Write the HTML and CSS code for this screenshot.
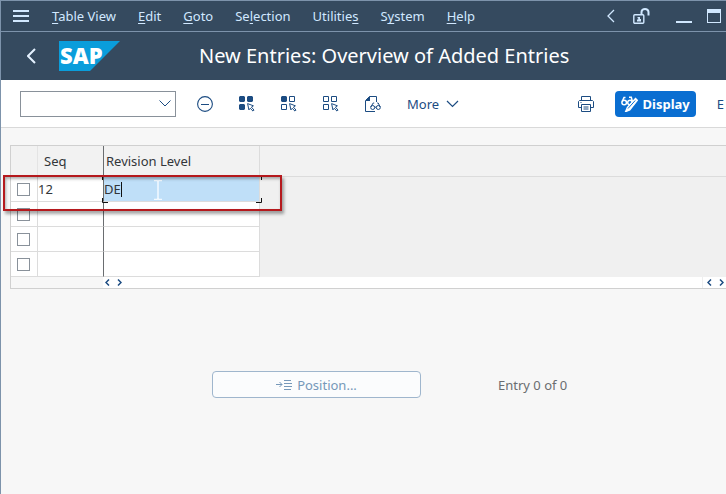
FILE: index.html
```html
<!DOCTYPE html>
<html lang="en">
<head>
  <meta charset="UTF-8">
  <meta name="viewport" content="width=device-width, initial-scale=1.0">
  <title>New Entries: Overview of Added Entries</title>
  <link rel="stylesheet" href="styles.css">
</head>
<body>
  <div class="window">
    <!-- Menu bar -->
    <nav class="menu-bar">
      <button class="hamburger" aria-label="Menu">
        <svg width="16" height="12" viewBox="0 0 16 12"><path d="M0 1h16M0 6h16M0 11h16" stroke="currentColor" stroke-width="2"/></svg>
      </button>
      <div class="menu-items">
        <button><u>T</u>able View</button>
        <button><u>E</u>dit</button>
        <button><u>G</u>oto</button>
        <button>Se<u>l</u>ection</button>
        <button>Utilitie<u>s</u></button>
        <button>S<u>y</u>stem</button>
        <button><u>H</u>elp</button>
      </div>
      <div class="window-controls">
        <button aria-label="Collapse">
          <svg width="8" height="14" viewBox="0 0 8 14"><path d="M7 1L1 7l6 6" fill="none" stroke="currentColor" stroke-width="1.3"/></svg>
        </button>
        <button aria-label="Unlock">
          <svg width="17" height="16" viewBox="0 0 17 16" fill="none" stroke="currentColor">
            <rect x=".8" y="6.8" width="10" height="8.5" rx="1" stroke-width="1.4"/>
            <path d="M8.5 6.5V4a3.5 3 0 0 1 7 0v3.5" stroke-width="2"/>
            <path d="M4.5 9H7v2h1v2.5H4v-2h1.200v-1.200h-.7z" fill="currentColor" stroke="none"/>
          </svg>
        </button>
        <button class="minimize" aria-label="Minimize">
          <svg width="16" height="14" viewBox="0 0 16 14"><path d="M0 13h16" stroke="currentColor" stroke-width="2"/></svg>
        </button>
        <button aria-label="Maximize">
          <svg width="14" height="14" viewBox="0 0 14 14"><rect x=".5" y=".5" width="13" height="13" fill="none" stroke="currentColor"/><path d="M0 0h14v4H0z" fill="currentColor"/></svg>
        </button>
      </div>
    </nav>

    <!-- Title bar -->
    <header class="title-bar">
      <button class="back" aria-label="Back">
        <svg width="9" height="16" viewBox="0 0 9 16"><path d="M8 1L1 8l7 7" fill="none" stroke="currentColor" stroke-width="2"/></svg>
      </button>
      <svg class="logo" width="62" height="30" viewBox="0 0 62 30" role="img" aria-label="SAP">
        <path d="M0 0h61L31 30H0z" fill="#0a9ddb"/>
        <text class="logo-text" x="1" y="23">SAP</text>
      </svg>
      <h1>New Entries: Overview of Added Entries</h1>
    </header>

    <!-- Toolbar -->
    <div class="toolbar">
      <div class="command">
        <select aria-label="Command"><option></option></select>
        <svg width="12" height="7" viewBox="0 0 12 7"><path d="M.5.5L6 6l5.500-5.500" fill="none" stroke="currentColor"/></svg>
      </div>
      <div class="tools">
        <button aria-label="Remove">
          <svg width="16" height="16" viewBox="0 0 16 16" fill="none" stroke="currentColor"><circle cx="8" cy="8" r="7.4" stroke-width="1.1"/><path d="M4 8.5h8"/></svg>
        </button>
        <button aria-label="Select all">
          <svg width="16" height="16" viewBox="0 0 16 16">
            <path d="M1 0h4l1 1v4L5 6H1L0 5V1zM9 0h4l1 1v4l-1 1H9L8 5V1zM1 8h4l1 1v4l-1 1H1l-1-1V9z" fill="currentColor"/>
            <path d="M8.6 7.6l5.8 2.2-2 1.3 2.6 3-1 1-2.8-2.8-1.3 1.6z" fill="#fff" stroke="currentColor"/>
          </svg>
        </button>
        <button aria-label="Select block">
          <svg width="16" height="16" viewBox="0 0 16 16">
            <path d="M1 0h4l1 1v4L5 6H1L0 5V1z" fill="currentColor"/>
            <path d="M8.5.5h5v5h-5zM.5 8.5h5v5h-5z" fill="none" stroke="currentColor"/>
            <path d="M8.6 7.6l5.8 2.2-2 1.3 2.6 3-1 1-2.8-2.8-1.3 1.6z" fill="#fff" stroke="currentColor"/>
          </svg>
        </button>
        <button aria-label="Deselect all">
          <svg width="16" height="16" viewBox="0 0 16 16">
            <path d="M.5.5h5v5h-5zM8.5.5h5v5h-5zM.5 8.5h5v5h-5z" fill="none" stroke="currentColor"/>
            <path d="M8.6 7.6l5.8 2.2-2 1.3 2.6 3-1 1-2.8-2.8-1.3 1.6z" fill="#fff" stroke="currentColor"/>
          </svg>
        </button>
        <button aria-label="Document details">
          <svg width="16" height="16" viewBox="0 0 16 16" fill="none" stroke="currentColor">
            <path d="M4.5.5h7V6M.5 5v10.5H10M.5 4.5l4-4"/>
            <path d="M0 5l5-5v5z" fill="currentColor" stroke="none"/>
            <circle cx="7.7" cy="11.5" r="2"/><circle cx="13.3" cy="11.5" r="2"/>
            <path d="M5.8 11l2.4-4h1M15.2 11l-2-4h-1M9.7 11.2h1.6"/>
          </svg>
        </button>
      </div>
      <button class="more">More
        <svg width="13" height="8" viewBox="0 0 13 8"><path d="M1 1l5.5 5.5L12 1" fill="none" stroke="currentColor" stroke-width="1.2"/></svg>
      </button>
      <div class="actions">
        <button aria-label="Print">
          <svg width="16" height="16" viewBox="0 0 16 16" fill="none" stroke="currentColor">
            <path d="M3.5 4V.5h9V4M3 11.5H.5v-6l1-1h13l1 1v6H13M3.5 8.5h9v7h-9zM5.5 11h5M5.5 13h5M2.5 6.5h1"/>
          </svg>
        </button>
        <button class="display">
          <svg width="17" height="16" viewBox="0 0 17 16" fill="none" stroke="currentColor" stroke-width="1.5">
            <circle cx="3.2" cy="6.5" r="2.3"/><circle cx="9" cy="6.5" r="2.3"/>
            <path d="M1.2 5.5L3 1.5h1.5M8 1.2h2.3l1 4"/>
            <path d="M14.5 2.5l1.8 1.8-7.6 9.6-4 1.6 1.8-4.2z" fill="currentColor"/>
            <path d="M7 12.5l7.2-8" stroke="#0a6ed1" stroke-width="1"/>
          </svg>
          Display
        </button>
        <button aria-label="Exit">E</button>
      </div>
    </div>

    <!-- Entries -->
    <main class="content">
      <div class="entries">
        <table>
          <colgroup>
            <col class="col-check">
            <col class="col-seq">
            <col class="col-rev">
            <col>
          </colgroup>
          <thead>
            <tr><th></th><th class="seq">Seq</th><th class="rev">Revision Level</th><th></th></tr>
          </thead>
          <tbody>
            <tr>
              <td><input type="checkbox" aria-label="Select row 1"></td>
              <td><input type="text" value="12" aria-label="Seq"></td>
              <td class="rev active">
                <input type="text" value="DE" aria-label="Revision Level">
                <span class="caret"></span>
                <svg class="pointer" width="8" height="20" viewBox="0 0 8 20"><path d="M0 .5h3l1 1 1-1h3M4 1v18M0 19.5h3l1-1 1 1h3" fill="none" stroke="#f4faff" stroke-width="1.5"/></svg>
                <svg class="focus-frame" width="160" height="28" viewBox="0 0 160 28"><path d="M.5 5V.5H6M154 .5h5.500V5M.5 23v4.500H6M154 27.500h5.500V23" fill="none" stroke="#111"/></svg>
              </td>
              <td></td>
            </tr>
            <tr>
              <td><input type="checkbox" aria-label="Select row 2"></td>
              <td><input type="text" aria-label="Seq"></td>
              <td class="rev"><input type="text" aria-label="Revision Level"></td>
              <td></td>
            </tr>
            <tr>
              <td><input type="checkbox" aria-label="Select row 3"></td>
              <td><input type="text" aria-label="Seq"></td>
              <td class="rev"><input type="text" aria-label="Revision Level"></td>
              <td></td>
            </tr>
            <tr>
              <td><input type="checkbox" aria-label="Select row 4"></td>
              <td><input type="text" aria-label="Seq"></td>
              <td class="rev"><input type="text" aria-label="Revision Level"></td>
              <td></td>
            </tr>
          </tbody>
        </table>
        <div class="scroll-row">
          <div class="scroll-fixed"></div>
          <div class="arrows">
            <button aria-label="Scroll left"><svg width="5" height="7" viewBox="0 0 5 7"><path d="M4 .5l-3 3 3 3" fill="none" stroke="currentColor" stroke-width="1.5"/></svg></button>
            <button aria-label="Scroll right"><svg width="5" height="7" viewBox="0 0 5 7"><path d="M1 .5l3 3-3 3" fill="none" stroke="currentColor" stroke-width="1.5"/></svg></button>
          </div>
          <div class="arrows end">
            <button aria-label="Scroll left"><svg width="5" height="7" viewBox="0 0 5 7"><path d="M4 .5l-3 3 3 3" fill="none" stroke="currentColor" stroke-width="1.5"/></svg></button>
            <button aria-label="Scroll right"><svg width="5" height="7" viewBox="0 0 5 7"><path d="M1 .5l3 3-3 3" fill="none" stroke="currentColor" stroke-width="1.5"/></svg></button>
          </div>
        </div>
        <!-- Highlight over the first row -->
        <div class="callout"></div>
      </div>

      <div class="footer">
        <button class="position">
          <svg width="16" height="10" viewBox="0 0 16 10" fill="none" stroke="currentColor"><path d="M0 4.500h6M3.500 2L6 4.500 3.500 7M8 .5h7M8 3.500h8M8 6.500h8M8 9.500h7"/></svg>
          Position...
        </button>
        <span class="entry-count">Entry 0 of 0</span>
      </div>
    </main>
  </div>
</body>
</html>
```

FILE: styles.css
```css
* {
  box-sizing: border-box;
}
body {
  margin: 0;
  font-family: "Noto Sans", "Open Sans", sans-serif;
  font-size: 13px;
  color: #32363a;
  background: #f7f7f7;
}
button {
  display: flex;
  align-items: center;
  padding: 0;
  border: none;
  background: none;
  font: inherit;
  color: inherit;
  white-space: nowrap;
  cursor: pointer;
}
svg {
  display: block;
  flex-shrink: 0;
}

.window {
  min-height: 100vh;
  border-top: 1px solid #7d93ab;
  border-left: 1px solid #7d93ab;
  overflow: hidden;
}

/* Menu bar */
.menu-bar {
  display: flex;
  align-items: center;
  height: 31px;
  padding: 0 5px 0 12px;
  border-bottom: 1px solid #7d93ab;
  background: #354a5f;
  color: #d1e8ff;
}
.menu-items {
  display: flex;
  gap: 22px;
  margin-left: 23px;
}
.menu-items button {
  display: block;
}
.menu-items u {
  text-decoration: underline 1px;
  text-decoration-skip-ink: none;
  text-underline-offset: 2px;
}
.window-controls {
  display: flex;
  align-items: center;
  gap: 18px;
  margin-left: auto;
}
.window-controls .minimize {
  margin: 0 -3px 0 8px;
}

/* Title bar */
.title-bar {
  display: flex;
  align-items: center;
  height: 48px;
  padding-left: 26px;
  background: #354a5f;
  color: #fff;
}
.back {
  margin-right: 23px;
  color: #e4f1ff;
}
.logo-text {
  font-family: "Open Sans", "Noto Sans", sans-serif;
  font-weight: 800;
  font-size: 22px;
  fill: #fff;
}
h1 {
  margin: 0 0 0 78px;
  font-size: 20px;
  line-height: 24px;
  font-weight: 400;
  white-space: nowrap;
}

/* Toolbar */
.toolbar {
  display: flex;
  align-items: center;
  height: 48px;
  padding: 0 2px 0 19px;
  border-bottom: 1px solid #d9d9d9;
  background: #fff;
  color: #1c4c82;
}
.command {
  display: grid;
  align-items: center;
  width: 156px;
}
.command select,
.command svg {
  grid-area: 1 / 1;
}
.command select {
  appearance: none;
  width: 100%;
  height: 26px;
  border: 1px solid #89919a;
  border-radius: 0;
  background: #fff;
  font: inherit;
}
.command svg {
  justify-self: end;
  margin-right: 5px;
  pointer-events: none;
}
.tools {
  display: flex;
  gap: 26px;
  margin-left: 21px;
}
.more {
  gap: 7px;
  margin-left: 26px;
}
.actions {
  display: flex;
  align-items: center;
  gap: 21px;
  margin-left: auto;
}
.display {
  gap: 5px;
  height: 26px;
  padding: 0 6px;
  border-radius: 4px;
  background: #0a6ed1;
  color: #fff;
  font-weight: 700;
}

/* Entries table */
.content {
  padding: 17px 0 0 9px;
}
.entries {
  position: relative;
}
table {
  width: 100%;
  table-layout: fixed;
  border-collapse: separate;
  border-spacing: 0;
  border-top: 1px solid #d0d0d0;
  border-left: 1px solid #d0d0d0;
}
.col-check {
  width: 27px;
}
.col-seq {
  width: 65px;
}
.col-rev {
  width: 157px;
}
th,
td {
  padding: 0;
  border-right: 1px solid #dcdcdc;
  border-bottom: 1px solid #dcdcdc;
}
th {
  height: 31px;
  background: #f2f2f2;
  font-weight: 400;
  text-align: left;
}
td {
  height: 25px;
  background: #fff;
}
th.seq {
  padding-left: 6px;
}
th.rev {
  padding-left: 2px;
}
.rev {
  border-left: 1px solid #6a6d70;
}
th:nth-child(2),
td:nth-child(2),
th:last-child,
td:last-child {
  border-right: none;
}
th:first-child {
  border-right-color: #e4e4e4;
}
td:last-child {
  border-bottom: none;
  background: #f0f0f0;
}
input[type="text"] {
  display: block;
  width: 100%;
  height: 24px;
  padding: 0;
  border: none;
  outline: none;
  background: transparent;
  font: inherit;
  color: inherit;
}
input[type="checkbox"] {
  appearance: none;
  display: block;
  width: 13px;
  height: 13px;
  margin: 0 0 0 6px;
  border: 1px solid #89919a;
  background: #fff;
}
.active {
  position: relative;
  background: #bfdff8;
}
.caret {
  position: absolute;
  top: 5px;
  left: 17px;
  width: 1px;
  height: 15px;
  background: #111;
}
.pointer {
  position: absolute;
  top: 3px;
  left: 50px;
}
.focus-frame {
  position: absolute;
  top: -2px;
  left: -2px;
}

/* Column scroll strip */
.scroll-row {
  display: flex;
  height: 12px;
  border-bottom: 1px solid #d0d0d0;
  background: #fff;
}
.scroll-fixed {
  width: 93px;
  border-left: 1px solid #d0d0d0;
  background: #f7f7f7;
}
.arrows {
  display: flex;
  gap: 7px;
  padding: 0 2px;
  color: #1c4c82;
}
.arrows.end {
  margin-left: auto;
  padding-left: 4px;
  border-left: 1px solid #eee;
}

.callout {
  position: absolute;
  top: 30px;
  left: -7px;
  width: 279px;
  height: 36px;
  border: 2px solid #b5191d;
  box-shadow: 2px 3px 3px rgba(0, 0, 0, 0.35), inset 1px 2px 3px rgba(0, 0, 0, 0.3);
  pointer-events: none;
}

/* Position button and entry counter */
.footer {
  display: flex;
  align-items: center;
  margin: 82px 0 0 202px;
}
.position {
  justify-content: center;
  gap: 5px;
  width: 209px;
  height: 27px;
  border: 1px solid #9fb6cd;
  border-radius: 4px;
  background: #fbfcfd;
  color: #7698b9;
}
.entry-count {
  margin-left: 77px;
  color: #6a6d70;
}
```
